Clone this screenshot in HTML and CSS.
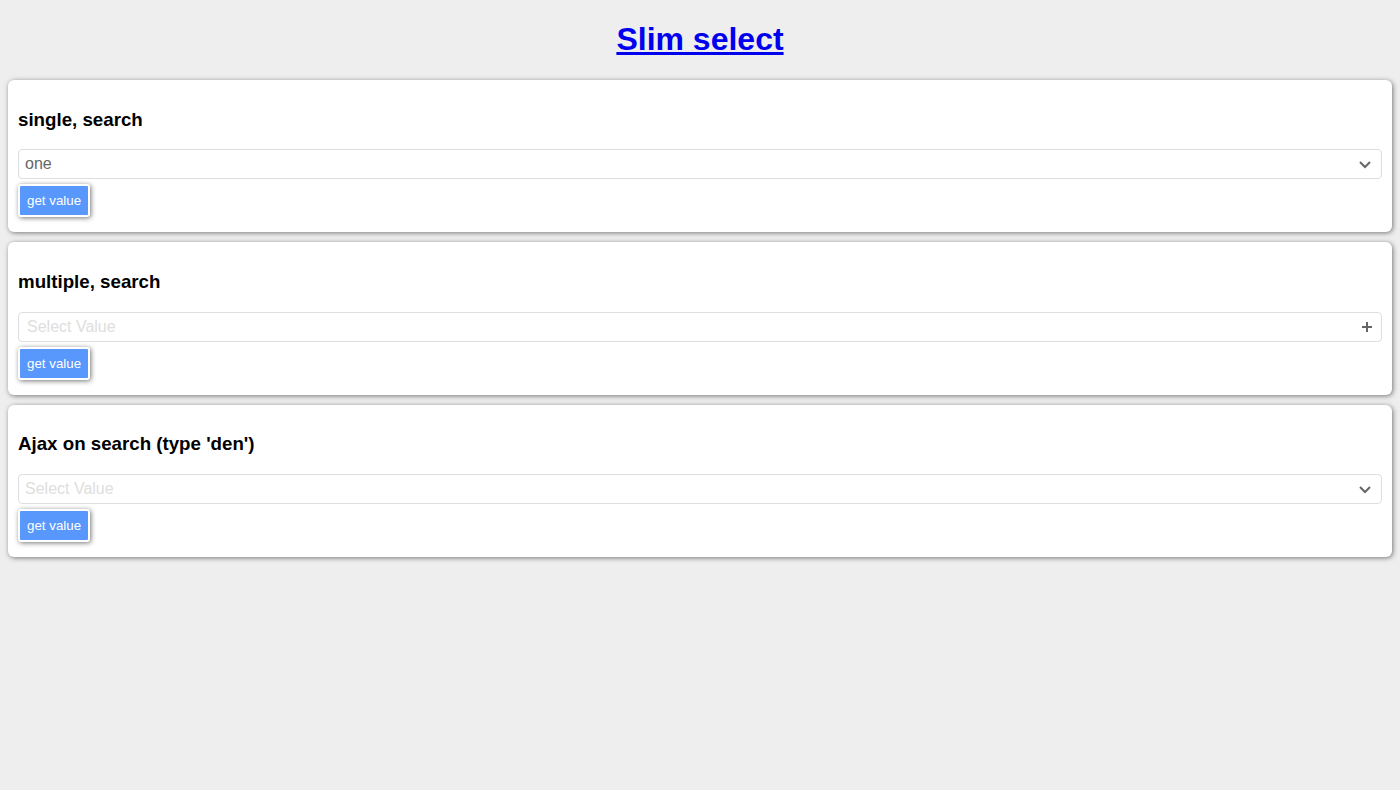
FILE: index.html
```html
<!DOCTYPE html>
<html lang="en">
<head>
<meta charset="utf-8">
<title>Slim select</title>
<link rel="stylesheet" href="styles.css">
</head>
<body>
<h1 class="title"><a href="#">Slim select</a></h1>
<section class="card">
  <h3 id="single-label">single, search</h3>
  <div class="field">
    <select class="control" aria-labelledby="single-label">
      <option>one</option>
      <option>two</option>
    </select>
    <svg class="icon" viewBox="0 0 12 12" aria-hidden="true"><path d="M1 4 L6 9 L11 4"/></svg>
  </div>
  <button class="button" type="button">get value</button>
</section>
<section class="card">
  <h3 id="multiple-label">multiple, search</h3>
  <div class="field field-multiple">
    <select class="control placeholder" aria-labelledby="multiple-label">
      <option>Select Value</option>
    </select>
    <svg class="icon" viewBox="0 0 12 12" aria-hidden="true"><path d="M6 1 V11 M1 6 H11"/></svg>
  </div>
  <button class="button" type="button">get value</button>
</section>
<section class="card">
  <h3 id="ajax-label">Ajax on search (type 'den')</h3>
  <div class="field">
    <select class="control placeholder" aria-labelledby="ajax-label">
      <option>Select Value</option>
    </select>
    <svg class="icon" viewBox="0 0 12 12" aria-hidden="true"><path d="M1 4 L6 9 L11 4"/></svg>
  </div>
  <button class="button" type="button">get value</button>
</section>
</body>
</html>
```
FILE: styles.css
```css
body {
  margin: 0;
  padding: 0 8px;
  background: #eee;
  font-family: "Liberation Sans", Arial, sans-serif;
}
.title {
  text-align: center;
}
.card {
  margin-bottom: 10px;
  padding: 10px 10px 15px;
  border-radius: 6px;
  background: #fff;
  box-shadow: 1px 1px 5px #777;
}
.field {
  display: grid;
  align-items: center;
}
.field > * {
  grid-area: 1 / 1;
}
.control {
  appearance: none;
  box-sizing: border-box;
  width: 100%;
  height: 30px;
  margin: 0;
  padding: 0 30px 1px 6px;
  border: 1px solid #dcdee2;
  border-radius: 4px;
  background: #fff;
  color: #666;
  font: inherit;
}
.placeholder {
  color: #dedede;
}
.field-multiple .control {
  padding-left: 8px;
}
.icon {
  justify-self: end;
  width: 12px;
  height: 12px;
  margin-right: 11px;
  fill: none;
  stroke: #666;
  stroke-width: 2;
  pointer-events: none;
}
.field-multiple .icon {
  margin-right: 9px;
}
.button {
  display: block;
  height: 33px;
  margin-top: 5px;
  padding: 0 7px;
  border: 2px solid #fff;
  border-radius: 3px;
  background: #5897fb;
  box-shadow: 1px 1px 5px #777;
  color: #fff;
  font-family: inherit;
  font-weight: 500;
}
```
